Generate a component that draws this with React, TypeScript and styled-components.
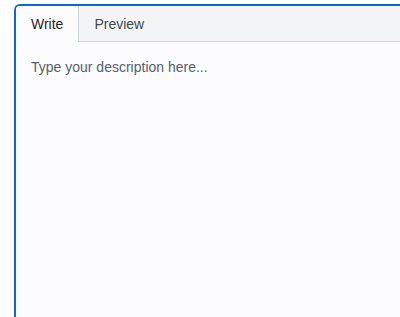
import React, { useState } from "react";
import styled, { createGlobalStyle } from "styled-components";

const GlobalStyle = createGlobalStyle`
  html, body {
    margin: 0;
    padding: 0;
    background: #ffffff;
    overflow: hidden;
  }
  body {
    font-family: "Liberation Sans", Arial, sans-serif;
  }
`;

const Page = styled.div`
  display: flex;
  padding: 4px 0 0 14px;
  width: 400px;
  height: 317px;
  box-sizing: border-box;
`;

// the editor bleeds off the right and bottom of the frame, so no border there
const Editor = styled.div`
  flex: 1;
  display: flex;
  flex-direction: column;
  border: 2px solid #0969da;
  border-right: 0;
  border-bottom: 0;
  border-top-left-radius: 6px;
  background: #fcfbfd;
  overflow: hidden;
`;

const TabBar = styled.div`
  display: flex;
  height: 35px;
  background: #f3f4f6;
  border-bottom: 1px solid #d0d7de;
`;

const Tab = styled.button<{ $active: boolean }>`
  appearance: none;
  border: 0;
  border-right: 1px solid ${(p) => (p.$active ? "#d0d7de" : "transparent")};
  margin-bottom: ${(p) => (p.$active ? "-1px" : "0")};
  background: ${(p) => (p.$active ? "#fcfbfd" : "transparent")};
  color: ${(p) => (p.$active ? "#1f2328" : "#424a53")};
  font-family: inherit;
  font-size: 14px;
  padding: 0 15px 0 15px;
  height: ${(p) => (p.$active ? "36px" : "35px")};
  cursor: pointer;
  border-top-left-radius: 4px;
`;

const Body = styled.div`
  flex: 1;
  padding: 15px 15px;
  font-size: 14px;
  line-height: 20px;
  color: #57606a;
`;

const App: React.FC = () => {
  const [tab, setTab] = useState("write");
  return (
    <Page>
      <GlobalStyle />
      <Editor>
        <TabBar>
          <Tab $active={tab === "write"} onClick={() => setTab("write")}>
            Write
          </Tab>
          <Tab $active={tab === "preview"} onClick={() => setTab("preview")}>
            Preview
          </Tab>
        </TabBar>
        <Body>Type your description here...</Body>
      </Editor>
    </Page>
  );
};

export default App;
